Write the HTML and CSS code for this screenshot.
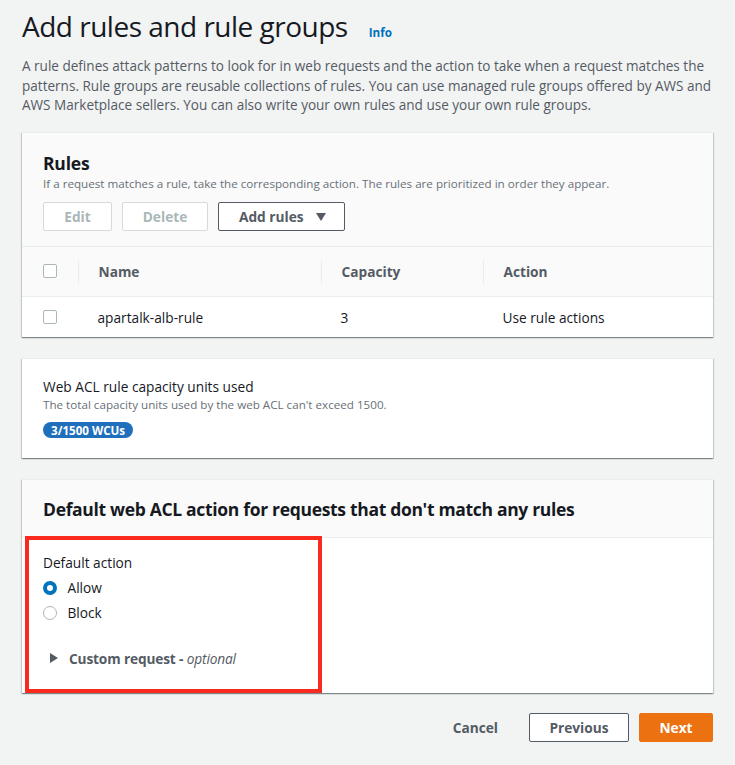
FILE: index.html
```html
<!DOCTYPE html>
<html lang="en">
<head>
<meta charset="utf-8">
<title>Add rules and rule groups</title>
<link rel="stylesheet" href="styles.css">
</head>
<body>
<div class="page">
  <div class="title-row">
    <h1 class="page-title">Add rules and rule groups</h1>
    <a class="info-link" href="#">Info</a>
  </div>
  <p class="intro">A rule defines attack patterns to look for in web requests and the action to take when a request matches the patterns. Rule groups are reusable collections of rules. You can use managed rule groups offered by AWS and AWS Marketplace sellers. You can also write your own rules and use your own rule groups.</p>

  <section class="card rules-card">
    <div class="card-header grey">
      <h2 class="card-title">Rules</h2>
      <div class="card-desc">If a request matches a rule, take the corresponding action. The rules are prioritized in order they appear.</div>
      <div class="btn-row">
        <button class="btn btn-disabled btn-edit">Edit</button>
        <button class="btn btn-disabled btn-delete">Delete</button>
        <button class="btn btn-normal btn-add">Add rules <span class="caret-down"></span></button>
      </div>
    </div>
    <div class="table">
      <div class="trow thead">
        <div class="cell cell-check"><span class="checkbox"></span></div>
        <div class="cell"><span class="th">Name</span></div>
        <div class="cell"><span class="th">Capacity</span></div>
        <div class="cell"><span class="th">Action</span></div>
      </div>
      <div class="trow tbody">
        <div class="cell cell-check"><span class="checkbox"></span></div>
        <div class="cell"><span class="td">apartalk-alb-rule</span></div>
        <div class="cell"><span class="td">3</span></div>
        <div class="cell"><span class="td">Use rule actions</span></div>
      </div>
    </div>
  </section>

  <section class="card wcu-card">
    <div class="wcu-title">Web ACL rule capacity units used</div>
    <div class="card-desc">The total capacity units used by the web ACL can't exceed 1500.</div>
    <span class="badge">3/1500 WCUs</span>
  </section>

  <section class="card default-card">
    <div class="card-header grey default-header">
      <h2 class="card-title">Default web ACL action for requests that don't match any rules</h2>
    </div>
    <div class="default-body">
      <div class="field-label">Default action</div>
      <label class="radio-row"><span class="radio radio-checked"></span>Allow</label>
      <label class="radio-row"><span class="radio"></span>Block</label>
      <div class="expander"><span class="caret-right"></span><span class="exp-label">Custom request - <i>optional</i></span></div>
    </div>
    <div class="highlight"></div>
  </section>

  <div class="footer">
    <button class="btn btn-link">Cancel</button>
    <button class="btn btn-normal btn-prev">Previous</button>
    <button class="btn btn-primary">Next</button>
  </div>
</div>
</body>
</html>
```
FILE: styles.css
```css
* { box-sizing: border-box; }
html, body { margin: 0; padding: 0; background: #f2f3f3; }
body {
  font-family: "Open Sans", "Noto Sans", sans-serif;
  font-size: 13.7px;
  color: #16191f;
}
.page { padding: 0 22px 20px 22px; }

.title-row { display: flex; align-items: baseline; margin-top: 9px; }
.page-title {
  margin: 0;
  font-size: 28px;
  font-weight: 400;
  line-height: 34px;
  letter-spacing: -0.5px;
  color: #16191f;
}
.info-link {
  margin-left: 21px;
  font-size: 11.7px;
  font-weight: 700;
  color: #0073bb;
  text-decoration: none;
}
.intro {
  margin: 14px 0 0 0;
  font-size: 13.55px;
  line-height: 19.5px;
  color: #545b64;
}

.card {
  position: relative;
  background: #fff;
  border-top: 1px solid #eaeded;
  box-shadow: 0 1px 1px 0 rgba(0,28,36,.3), 1px 1px 1px 0 rgba(0,28,36,.15), -1px 1px 1px 0 rgba(0,28,36,.15);
}
.grey { background: #fafafa; }
.rules-card { margin-top: 16.5px; }
.card-header {
  padding: 18.5px 21px 15px 21px;
  border-bottom: 1px solid #eaeded;
}
.card-title {
  margin: 0;
  font-size: 17.5px;
  font-weight: 700;
  line-height: 22px;
  letter-spacing: -0.2px;
  color: #16191f;
}
.default-header .card-title { letter-spacing: -0.32px; }
.card-desc {
  margin-top: 2.5px;
  font-size: 11.65px;
  line-height: 16px;
  color: #687078;
}
.btn-row { display: flex; gap: 10px; margin-top: 10px; }

.btn {
  display: inline-flex;
  align-items: center;
  justify-content: center;
  height: 29px;
  padding: 0 19px;
  font-family: inherit;
  font-size: 13.7px;
  font-weight: 700;
  border-radius: 2px;
  background: #fff;
  cursor: pointer;
}
.btn-disabled { border: 1px solid #d5dbdb; color: #aab7b8; }
.btn-edit { width: 69px; }
.btn-delete { width: 86px; }
.btn-normal { border: 1px solid #545b64; color: #545b64; }
.btn-add { width: 127px; padding: 0 18px 0 20px; justify-content: space-between; }
.caret-down {
  width: 0; height: 0;
  border-left: 5px solid transparent;
  border-right: 5px solid transparent;
  border-top: 8px solid #545b64;
}

.table { display: flex; flex-direction: column; }
.trow {
  display: grid;
  grid-template-columns: 56px 243px 162px 1fr;
}
.thead { height: 50px; background: #fafafa; border-bottom: 1px solid #eaeded; }
.tbody { height: 40px; }
.cell { display: flex; align-items: center; }
.cell-check { padding-left: 21px; }
.checkbox {
  display: block;
  width: 14px; height: 14px;
  border: 1px solid #aab7b8;
  border-radius: 2px;
  background: #fff;
}
.thead .cell-check .checkbox { margin-top: -2px; }
.th {
  display: block;
  height: 24px;
  line-height: 24px;
  padding-left: 19.5px;
  border-left: 1px solid #eaeded;
  font-weight: 700;
  color: #545b64;
}
.td { padding-left: 19.5px; color: #16191f; }

.wcu-card { margin-top: 21px; padding: 17.5px 21px 19.5px 21px; }
.wcu-title { line-height: 20px; }
.wcu-card .card-desc { margin-top: 0; }
.badge {
  display: inline-flex;
  align-items: center;
  margin-top: 9.5px;
  height: 16px;
  padding: 0 8px;
  border-radius: 8px;
  background: #1f6fbd;
  color: #fff;
  font-size: 11.6px;
  font-weight: 700;
}

.default-card { margin-top: 21px; }
.default-header { padding: 18px 21px 16.5px 21px; }
.default-body { padding: 15.5px 21px 24.5px 21px; }
.field-label { line-height: 20px; }
.radio-row {
  display: flex;
  align-items: center;
  gap: 10.5px;
  height: 20px;
  margin-top: 5px;
  line-height: 20px;
}
.radio {
  display: block;
  width: 14px; height: 14px;
  border-radius: 50%;
  border: 1.5px solid #aab7b8;
  background: #fff;
}
.radio-checked { border: 4px solid #0073bb; }
.expander {
  display: flex;
  align-items: center;
  gap: 11px;
  margin-top: 25px;
  padding-left: 7px;
  height: 20px;
  color: #545b64;
  letter-spacing: -0.15px;
}
.caret-right {
  width: 0; height: 0;
  border-top: 5px solid transparent;
  border-bottom: 5px solid transparent;
  border-left: 8px solid #545b64;
}
.exp-label { font-weight: 700; }
.exp-label i { font-weight: 400; }

.highlight {
  position: absolute;
  left: 3px;
  top: 56px;
  width: 297px;
  height: 157px;
  border: 4px solid #fb2a1f;
  pointer-events: none;
}

.footer {
  display: flex;
  justify-content: flex-end;
  align-items: center;
  margin-top: 20px;
}
.btn-link { border: 1px solid transparent; background: transparent; color: #545b64; padding: 0 20px; margin-right: 10px; }
.btn-prev { width: 100px; margin-right: 10px; }
.btn-primary { width: 74px; border: 1px solid #ec7211; background: #ec7211; color: #fff; }
```
